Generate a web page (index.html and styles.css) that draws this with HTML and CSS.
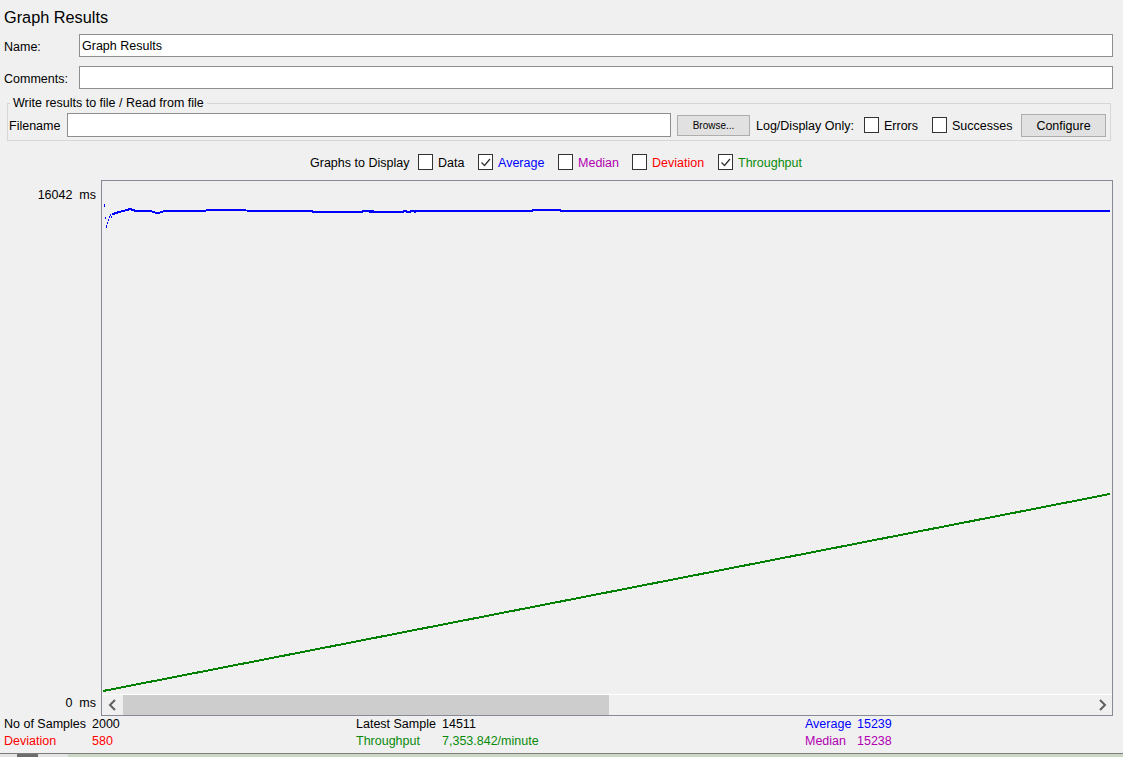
FILE: index.html
```html
<!DOCTYPE html>
<html>
<head>
<meta charset="utf-8">
<title>Graph Results</title>
<link rel="stylesheet" href="styles.css">
</head>
<body>
<div class="app">
  <div class="title">Graph Results</div>

  <div class="field-row row-name">
    <span class="field-label">Name:</span>
    <div class="text-input">Graph Results</div>
  </div>
  <div class="field-row row-comments">
    <span class="field-label">Comments:</span>
    <div class="text-input"></div>
  </div>

  <fieldset class="file-box">
    <legend>Write results to file / Read from file</legend>
    <div class="file-row">
      <span class="file-label">Filename</span>
      <div class="text-input file-input"></div>
      <div class="btn btn-browse">Browse...</div>
      <span class="log-label">Log/Display Only:</span>
      <span class="check"></span><span class="check-label lbl-errors">Errors</span>
      <span class="check"></span><span class="check-label lbl-succ">Successes</span>
      <div class="btn btn-config">Configure</div>
    </div>
  </fieldset>

  <div class="graphs-row">
    <span class="gr-label">Graphs to Display</span>
    <span class="check"></span><span class="check-label w-data">Data</span>
    <span class="check"><svg viewBox="0 0 13 13" width="13" height="13"><path d="M2.5 6.5 L5.5 9.5 L11 3" fill="none" stroke="#333" stroke-width="1.3"/></svg></span><span class="check-label w-avg c-blue">Average</span>
    <span class="check"></span><span class="check-label w-med c-purple">Median</span>
    <span class="check"></span><span class="check-label w-dev c-red">Deviation</span>
    <span class="check"><svg viewBox="0 0 13 13" width="13" height="13"><path d="M2.5 6.5 L5.5 9.5 L11 3" fill="none" stroke="#333" stroke-width="1.3"/></svg></span><span class="check-label c-green">Throughput</span>
  </div>

  <div class="graph-section">
    <div class="axis">
      <span>16042&nbsp; ms</span>
      <span>0&nbsp; ms</span>
    </div>
    <div class="graph-box">
      <svg class="plot" viewBox="102 181 1010 513" width="1010" height="513" shape-rendering="crispEdges">
        <g fill="#0000ff">
          <rect x="104" y="204" width="1" height="3"/>
          <rect x="105" y="217" width="1" height="2"/>
          <rect x="106" y="225" width="1" height="3"/>
          <rect x="107" y="222" width="1" height="2"/>
          <rect x="108" y="219" width="1" height="2"/>
          <rect x="109" y="216" width="1" height="2"/>
          <rect x="110" y="214" width="1" height="2"/>
          <rect x="111" y="216" width="1" height="2"/>
          <rect x="112" y="213" width="1" height="2"/>
        </g>
        <polyline fill="none" stroke="#0000ff" stroke-width="2"
          points="113,214 116,213 119,212 123,211 127,210 130,209 133,210 136,211 140,211 146,211 149,210.5 152,211.5 155,212.5 160,212.5 163,211.5 167,211 178,210.5 182,210.5 206,210.5 208,210 240,210 246,210.5 280,211 312,211 313,212 362,212 363,211 369,211 370,212 371,211 372,212 373,211 374,212 376,212 403,212 404,211 406,211 407,212 410,212 411,211 414,211 415,212 416,211 532,211 533,210 560,210 561,211 1110,211"/>
        <line x1="103" y1="691" x2="1110" y2="494" stroke="#008000" stroke-width="2"/>
      </svg>
      <div class="hscroll">
        <div class="sb-arrow">
          <svg viewBox="0 0 20 20" width="20" height="20"><polyline points="12,5 7,10 12,15" fill="none" stroke="#606060" stroke-width="2"/></svg>
        </div>
        <div class="sb-track"><div class="sb-thumb"></div></div>
        <div class="sb-arrow">
          <svg viewBox="0 0 20 20" width="20" height="20"><polyline points="8,5 13,10 8,15" fill="none" stroke="#606060" stroke-width="2"/></svg>
        </div>
      </div>
    </div>
  </div>

  <div class="stats">
    <div class="stat-group g1">
      <span>No of Samples</span><span>2000</span>
      <span class="c-red">Deviation</span><span class="c-red">580</span>
    </div>
    <div class="stat-group g2">
      <span>Latest Sample</span><span>14511</span>
      <span class="c-green">Throughput</span><span class="c-green">7,353.842/minute</span>
    </div>
    <div class="stat-group g3">
      <span class="c-blue">Average</span><span class="c-blue">15239</span>
      <span class="c-purple">Median</span><span class="c-purple">15238</span>
    </div>
  </div>

  <div class="bottom-strip"><div class="strip-dark"></div><div class="strip-green"></div></div>
</div>
</body>
</html>
```
FILE: styles.css
```css
html, body {
  margin: 0;
  padding: 0;
  background: #f0f0f0;
}
body {
  width: 1123px;
  height: 757px;
  overflow: hidden;
  font-family: "Liberation Sans", Arial, sans-serif;
  font-size: 12.5px;
  color: #000;
}
.app {
  padding: 0 10px 0 4px;
  display: flex;
  flex-direction: column;
}
.title {
  margin-top: 7px;
  font-size: 16.3px;
  line-height: 20px;
}
.field-row {
  display: flex;
  align-items: center;
  height: 23px;
}
.row-name { margin-top: 7px; }
.row-comments { margin-top: 9px; }
.field-label {
  width: 75px;
  flex: none;
  padding-top: 2px;
}
.text-input {
  flex: 1;
  height: 23px;
  box-sizing: border-box;
  background: #fff;
  border: 1px solid #8e8e8e;
  padding: 1px 0 0 2px;
  line-height: 20px;
}
.file-box {
  margin: 7px 2px 0 3px;
  padding: 0 4px 3px 1px;
  border: 1px solid #d6d6d6;
  min-width: 0;
}
.file-box legend {
  padding: 0 3px;
  margin-left: 1px;
  line-height: 14px;
}
.file-row {
  display: flex;
  align-items: center;
  height: 24px;
  margin-top: 3px;
}
.file-label { width: 58px; flex: none; padding-top: 1px; }
.file-input {
  flex: none;
  width: 604px;
  height: 24px;
}
.btn {
  flex: none;
  box-sizing: border-box;
  background: #e1e1e1;
  border: 1px solid #adadad;
  display: flex;
  align-items: center;
  justify-content: center;
}
.btn-browse {
  width: 73px;
  height: 21px;
  margin-left: 6px;
  font-size: 10px;
}
.btn-config {
  width: 85px;
  height: 23px;
  padding-top: 1px;
}
.log-label { width: 108px; flex: none; margin-left: 6px; padding-top: 1px; }
.check {
  flex: none;
  width: 15px;
  height: 16px;
  box-sizing: border-box;
  background: #fff;
  border: 1px solid #333;
  display: flex;
  align-items: center;
  justify-content: center;
}
.check-label { margin-left: 5px; flex: none; padding-top: 1px; }
.lbl-errors { width: 48px; }
.lbl-succ { width: 69px; }

.graphs-row {
  display: flex;
  align-items: center;
  justify-content: center;
  height: 20px;
  margin-top: 11px;
  padding-right: 5px;
}
.gr-label { width: 108px; flex: none; padding-top: 1px; }
.w-data { width: 40px; }
.w-avg { width: 60px; }
.w-med { width: 54px; }
.w-dev { width: 66px; }

.c-blue { color: #0000ff; }
.c-purple { color: #b000b0; }
.c-red { color: #ff0000; }
.c-green { color: #0a8a0a; }

.graph-section {
  display: flex;
  margin-top: 8px;
  height: 536px;
}
.axis {
  width: 97px;
  flex: none;
  box-sizing: border-box;
  padding: 8px 5px 6px 0;
  display: flex;
  flex-direction: column;
  justify-content: space-between;
  align-items: flex-end;
  line-height: 14px;
}
.graph-box {
  flex: 1;
  border: 1px solid #868a94;
  display: flex;
  flex-direction: column;
}
.plot {
  display: block;
  flex: none;
}
.hscroll {
  border-top: 1px solid #ffffff;
  height: 20px;
  display: flex;
}
.sb-arrow {
  width: 21px;
  flex: none;
  display: flex;
  align-items: center;
  justify-content: center;
}
.sb-track {
  flex: 1;
  display: flex;
}
.sb-thumb {
  width: 486px;
  background: #cdcdcd;
}

.stats {
  display: flex;
  line-height: 17px;
}
.stat-group {
  display: grid;
  grid-template-rows: 17px 17px;
}
.g1 { width: 352px; grid-template-columns: 88px auto; }
.g2 { width: 449px; grid-template-columns: 86px auto; }
.g3 { flex: 1; grid-template-columns: 52px auto; }
.stat-group span { white-space: nowrap; }

.bottom-strip {
  margin: 3px -10px 0 -4px;
  border-top: 1px solid #7c7c7c;
  height: 4px;
  display: flex;
  background: #e4e4e4;
}
.strip-dark {
  margin-left: 17px;
  width: 21px;
  background: #6d6d6d;
}
.strip-green {
  flex: 1;
  margin-left: 30px;
  background: #cbd6c4;
}
```
